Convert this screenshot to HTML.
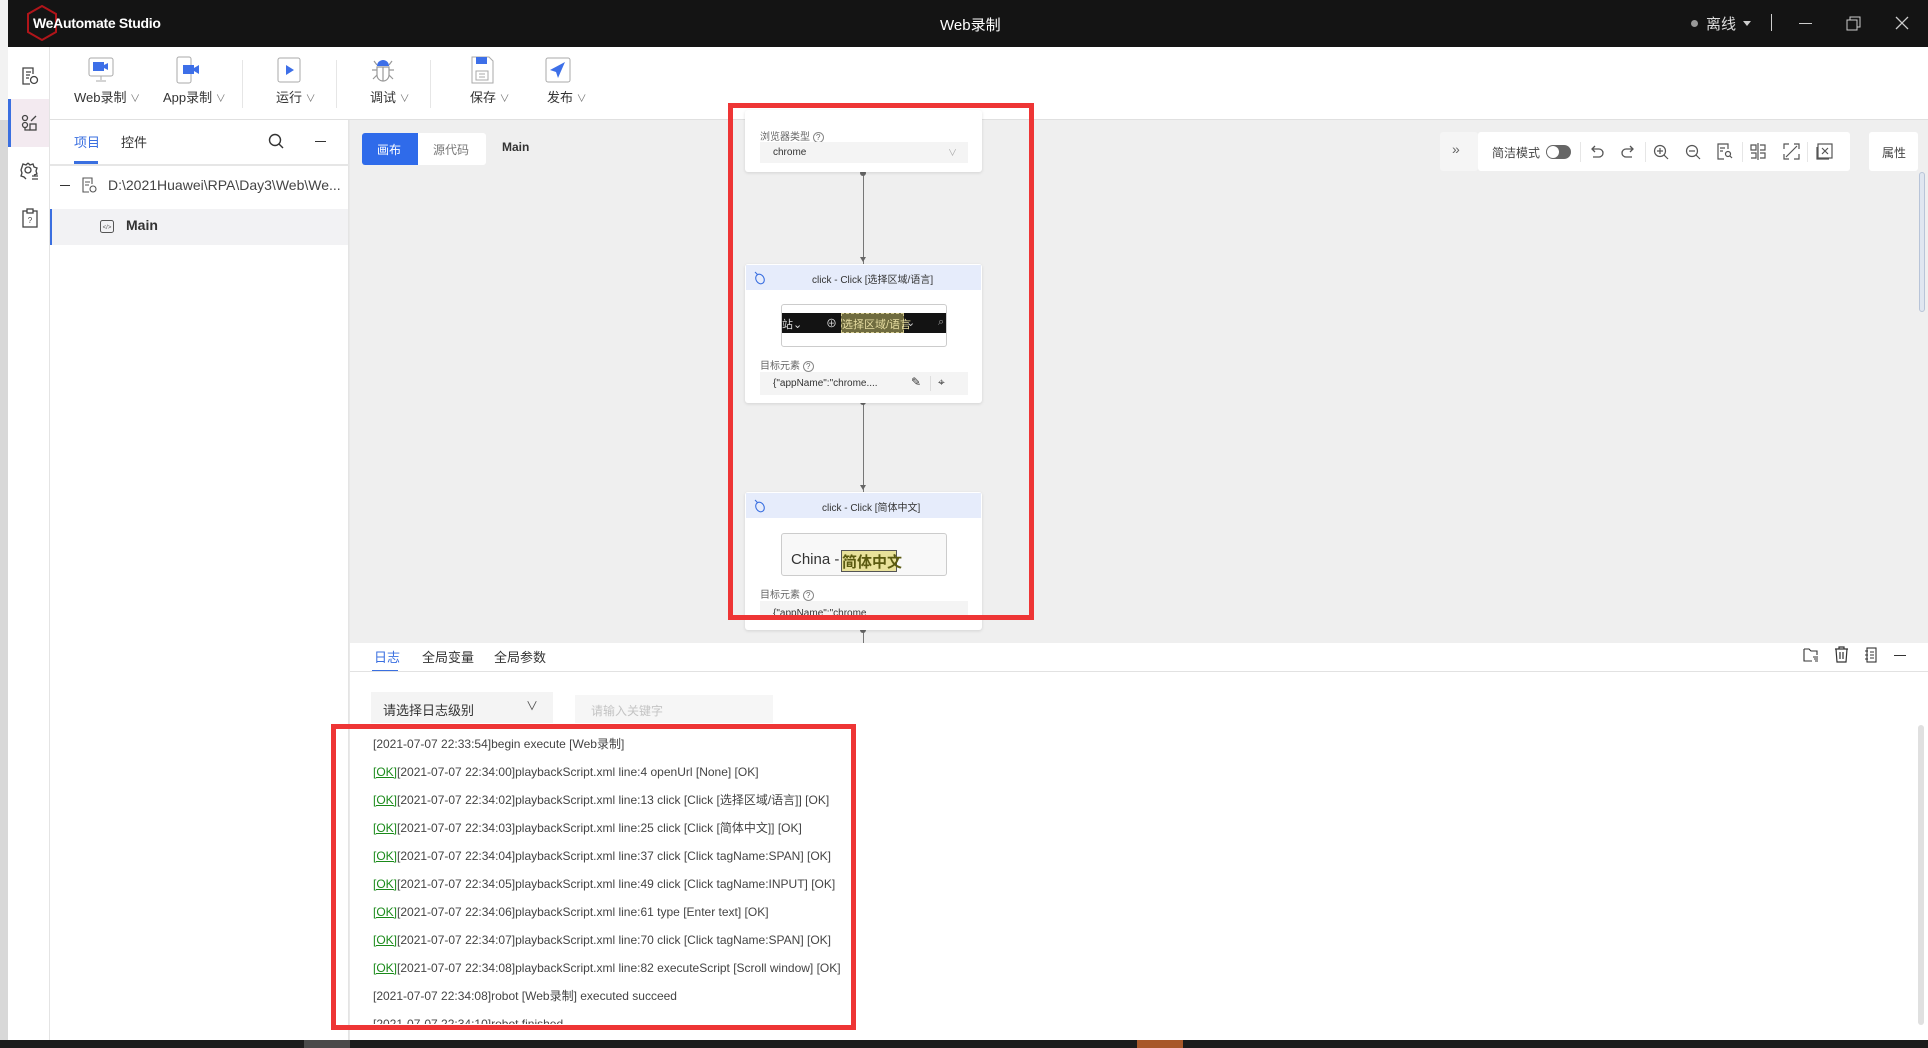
<!DOCTYPE html>
<html><head><meta charset="utf-8">
<style>
*{margin:0;padding:0;box-sizing:border-box}
body{width:1928px;height:1048px;overflow:hidden;position:relative;background:#e9e9e9;font-family:"Liberation Sans","Noto Sans CJK SC",sans-serif;color:#333}
.a{position:absolute}
.t{position:absolute;white-space:nowrap}
.ico{position:absolute}
</style></head><body>
<div class="a" style="left:0;top:0;width:8px;height:1040px;background:#d8d8d8"></div>
<div class="a" style="left:0;top:0;width:8px;height:120px;background:#f2f2f2"></div>
<div class="a" style="left:8px;top:0;width:1920px;height:47px;background:#141414"></div>
<svg class="ico" style="left:26px;top:5px" width="32" height="36" viewBox="0 0 32 36"><polygon points="16,1 30,9 30,27 16,35 2,27 2,9" fill="none" stroke="#b0151a" stroke-width="2"/></svg>
<div class="t" style="left:33px;top:15px;color:#fff;font-size:14px;font-weight:bold;letter-spacing:-0.3px">WeAutomate Studio</div>
<div class="t" style="left:940px;top:14px;color:#fff;font-size:15px">Web录制</div>
<div class="a" style="left:1691px;top:20px;width:7px;height:7px;border-radius:50%;background:#999"></div>
<div class="t" style="left:1706px;top:13px;color:#ddd;font-size:15px">离线</div>
<div class="a" style="left:1743px;top:21px;border-left:4px solid transparent;border-right:4px solid transparent;border-top:5px solid #ccc"></div>
<div class="a" style="left:1771px;top:14px;width:1px;height:17px;background:#ccc"></div>
<div class="a" style="left:1799px;top:23px;width:13px;height:1px;background:#ccc"></div>
<svg class="ico" style="left:1846px;top:16px" width="15" height="15"><rect x="1" y="4" width="10" height="10" fill="none" stroke="#ccc"/><path d="M4 4V1h10v10h-3" fill="none" stroke="#ccc"/></svg>
<svg class="ico" style="left:1895px;top:16px" width="14" height="14"><path d="M1 1L13 13M13 1L1 13" stroke="#ccc" stroke-width="1.3"/></svg>

<div class="a" style="left:8px;top:47px;width:42px;height:993px;background:#fff;border-right:1px solid #e4e4e4"></div>
<div class="a" style="left:8px;top:99px;width:41px;height:48px;background:#f3eaf0;border-left:3px solid #3a6fe0"></div>
<svg class="ico" style="left:21px;top:66px" width="18" height="20" viewBox="0 0 18 20" fill="none" stroke="#444" stroke-width="1.3"><path d="M12 8V2H2v16h7"/><path d="M5 6h5M5 9h4M5 12h3"/><circle cx="13" cy="14" r="3.5"/></svg>
<svg class="ico" style="left:21px;top:114px" width="18" height="18" viewBox="0 0 18 18" fill="none" stroke="#444" stroke-width="1.3"><circle cx="4" cy="4" r="2.5"/><circle cx="4" cy="11" r="2.5"/><rect x="9" y="10" width="6" height="6"/><path d="M10 7l5-5M4 13.5V16h5"/></svg>
<svg class="ico" style="left:20px;top:161px" width="20" height="20" viewBox="0 0 20 20" fill="none" stroke="#444" stroke-width="1.3"><circle cx="8" cy="9" r="3"/><path d="M8 2l2 2 3-1 1 3 3 1-1 3 1 3-3 1"/><path d="M8 2L6 4 3 3 2 6l-1 3 1 3-1 3 3 1 2 2"/><path d="M12 15h6M12 18h6"/></svg>
<svg class="ico" style="left:21px;top:208px" width="18" height="20" viewBox="0 0 18 20" fill="none" stroke="#444" stroke-width="1.3"><rect x="2" y="3" width="14" height="16"/><rect x="6" y="1" width="6" height="4" fill="#fff"/><text x="9" y="15" font-size="8" text-anchor="middle" fill="#444" stroke="none">?</text></svg>

<div class="a" style="left:50px;top:47px;width:1878px;height:73px;background:#fff;border-bottom:1px solid #e0e0e0"></div>
<svg class="ico" style="left:88px;top:57px" width="26" height="26" viewBox="0 0 26 26"><rect x="1" y="1" width="24" height="18" rx="2" fill="#fff" stroke="#aaa"/><rect x="5" y="5" width="11" height="9" fill="#3d6fe8"/><path d="M16 8l4-2v7l-4-2z" fill="#3d6fe8"/><path d="M13 19v4M8 24h10" stroke="#aaa"/></svg>
<svg class="ico" style="left:176px;top:56px" width="26" height="28" viewBox="0 0 26 28"><rect x="1" y="1" width="14" height="26" rx="2" fill="#fff" stroke="#aaa"/><rect x="7" y="9" width="11" height="9" fill="#3d6fe8"/><path d="M18 12l5-3v9l-5-3z" fill="#3d6fe8"/></svg>
<svg class="ico" style="left:277px;top:57px" width="24" height="26" viewBox="0 0 24 26"><rect x="1" y="1" width="22" height="24" rx="2" fill="#fff" stroke="#aaa"/><path d="M9 8l8 5-8 5z" fill="#3d6fe8"/></svg>
<svg class="ico" style="left:370px;top:56px" width="26" height="28" viewBox="0 0 26 28" fill="none" stroke="#999" stroke-width="1.2"><path d="M7 10a6 6 0 0 1 12 0z" fill="#3d6fe8" stroke="none"/><path d="M7 11h12v8a6 6 0 0 1-12 0z"/><path d="M13 11v14M7 14H2M19 14h5M7 19l-4 4M19 19l4 4M7 9L4 5M19 9l3-4"/></svg>
<svg class="ico" style="left:470px;top:56px" width="24" height="28" viewBox="0 0 24 28"><path d="M2 1h17l4 4v22H2z" fill="#fff" stroke="#aaa"/><rect x="6" y="1" width="11" height="7" fill="#3d6fe8"/><rect x="6" y="15" width="12" height="9" fill="none" stroke="#aaa"/><path d="M9 18h6M9 21h6" stroke="#aaa"/></svg>
<svg class="ico" style="left:545px;top:57px" width="26" height="26" viewBox="0 0 26 26"><rect x="1" y="1" width="24" height="24" rx="2" fill="#fff" stroke="#aaa"/><path d="M20 5L5 13l6 2 2 6z" fill="#3d6fe8"/></svg>
<div class="t" style="left:74px;top:87px;font-size:13px;color:#333">Web录制 <span style="font-size:10px;color:#777">∨</span></div>
<div class="t" style="left:163px;top:87px;font-size:13px;color:#333">App录制 <span style="font-size:10px;color:#777">∨</span></div>
<div class="t" style="left:276px;top:87px;font-size:13px;color:#333">运行 <span style="font-size:10px;color:#777">∨</span></div>
<div class="t" style="left:370px;top:87px;font-size:13px;color:#333">调试 <span style="font-size:10px;color:#777">∨</span></div>
<div class="t" style="left:470px;top:87px;font-size:13px;color:#333">保存 <span style="font-size:10px;color:#777">∨</span></div>
<div class="t" style="left:547px;top:87px;font-size:13px;color:#333">发布 <span style="font-size:10px;color:#777">∨</span></div>
<div class="a" style="left:242px;top:60px;width:1px;height:48px;background:#e6e6e6"></div>
<div class="a" style="left:336px;top:60px;width:1px;height:48px;background:#e6e6e6"></div>
<div class="a" style="left:430px;top:60px;width:1px;height:48px;background:#e6e6e6"></div>

<div class="a" style="left:50px;top:120px;width:299px;height:920px;background:#fff;border-right:1px solid #e4e4e4"></div>
<div class="t" style="left:74px;top:132px;font-size:13px;color:#3a6fe0">项目</div>
<div class="t" style="left:121px;top:132px;font-size:13px;color:#333">控件</div>
<div class="a" style="left:74px;top:161px;width:24px;height:3px;background:#3a6fe0"></div>
<div class="a" style="left:50px;top:164px;width:299px;height:2px;background:#e6e6e6"></div>
<svg class="ico" style="left:268px;top:133px" width="17" height="17" fill="none" stroke="#333" stroke-width="1.4"><circle cx="7" cy="7" r="5.5"/><path d="M11 11l4 4"/></svg>
<div class="a" style="left:315px;top:141px;width:11px;height:1px;background:#333"></div>
<div class="a" style="left:60px;top:185px;width:10px;height:1px;background:#333"></div>
<svg class="ico" style="left:82px;top:177px" width="15" height="17" viewBox="0 0 15 17" fill="none" stroke="#555" stroke-width="1.1"><path d="M10 7V1H1v14h6"/><path d="M3 5h5M3 8h4"/><circle cx="11" cy="12" r="3"/></svg>
<div class="t" style="left:108px;top:177px;font-size:14px;color:#444">D:\2021Huawei\RPA\Day3\Web\We...</div>
<div class="a" style="left:50px;top:209px;width:298px;height:36px;background:#f2f2f4;border-left:2px solid #3a6fe0"></div>
<svg class="ico" style="left:100px;top:220px" width="14" height="13"><rect x="0.5" y="0.5" width="13" height="12" rx="2" fill="none" stroke="#555"/><text x="7" y="9" font-size="6" text-anchor="middle" fill="#555">&lt;/&gt;</text></svg>
<div class="t" style="left:126px;top:217px;font-size:14px;font-weight:bold;color:#333">Main</div>

<div class="a" style="left:350px;top:120px;width:1578px;height:523px;background:#efefef"></div>
<div class="a" style="left:362px;top:133px;width:56px;height:32px;background:#2f6bea;border-radius:3px 0 0 3px"></div>
<div class="t" style="left:377px;top:141px;font-size:12px;color:#fff">画布</div>
<div class="a" style="left:418px;top:133px;width:68px;height:32px;background:#fff;border-radius:0 3px 3px 0"></div>
<div class="t" style="left:433px;top:141px;font-size:12px;color:#777">源代码</div>
<div class="t" style="left:502px;top:140px;font-size:12px;color:#333;font-weight:bold">Main</div>

<div class="a" style="left:1440px;top:132px;width:38px;height:39px;background:#f5f5f5;border-radius:3px"></div>
<div class="t" style="left:1452px;top:141px;font-size:14px;color:#666">»</div>
<div class="a" style="left:1478px;top:132px;width:372px;height:39px;background:#fff;border-radius:3px"></div>
<div class="t" style="left:1492px;top:144px;font-size:12px;color:#444">简洁模式</div>
<div class="a" style="left:1546px;top:145px;width:25px;height:14px;border-radius:7px;background:#666"></div>
<div class="a" style="left:1547px;top:146px;width:12px;height:12px;border-radius:50%;background:#fff"></div>
<div class="a" style="left:1580px;top:142px;width:1px;height:20px;background:#e6e6e6"></div>
<div class="a" style="left:1645px;top:142px;width:1px;height:20px;background:#e6e6e6"></div>
<div class="a" style="left:1742px;top:142px;width:1px;height:20px;background:#e6e6e6"></div>
<div class="a" style="left:1807px;top:142px;width:1px;height:20px;background:#e6e6e6"></div>
<svg class="ico" style="left:1589px;top:144px" width="16" height="16" fill="none" stroke="#555" stroke-width="1.3"><path d="M4 5h6a4 4 0 0 1 0 8H4"/><path d="M6 2L3 5l3 3"/></svg>
<svg class="ico" style="left:1620px;top:144px" width="16" height="16" fill="none" stroke="#555" stroke-width="1.3"><path d="M12 5H6a4 4 0 0 0 0 8h6"/><path d="M10 2l3 3-3 3"/></svg>
<svg class="ico" style="left:1653px;top:144px" width="16" height="16" fill="none" stroke="#555" stroke-width="1.2"><circle cx="7" cy="7" r="5.5"/><path d="M11 11l4 4M4 7h6M7 4v6"/></svg>
<svg class="ico" style="left:1685px;top:144px" width="16" height="16" fill="none" stroke="#555" stroke-width="1.2"><circle cx="7" cy="7" r="5.5"/><path d="M11 11l4 4M4 7h6"/></svg>
<svg class="ico" style="left:1717px;top:143px" width="16" height="17" fill="none" stroke="#555" stroke-width="1.2"><path d="M11 6V1H1v15h6"/><path d="M3 5h5M3 8h3"/><circle cx="11" cy="11" r="2.5"/><path d="M13 13l2 2"/></svg>
<svg class="ico" style="left:1750px;top:143px" width="16" height="17" fill="none" stroke="#555" stroke-width="1.2"><path d="M8 0v17M1 2h5v5H1zM10 2h5v5h-5M1 10h5v5H1M10 10h5v5h-5"/></svg>
<svg class="ico" style="left:1783px;top:143px" width="17" height="17" fill="none" stroke="#555" stroke-width="1.2"><path d="M1 6V1h5M11 1h5v5M16 11v5h-5M6 16H1v-5M3 14L14 3"/></svg>
<svg class="ico" style="left:1816px;top:143px" width="17" height="17" fill="none" stroke="#555" stroke-width="1.2"><rect x="2" y="1" width="14" height="14"/><path d="M1 4v12h12M6 5l6 6M12 5l-6 6"/></svg>
<div class="a" style="left:1869px;top:132px;width:49px;height:39px;background:#fff;border-radius:3px"></div>
<div class="t" style="left:1882px;top:144px;font-size:12px;color:#444">属性</div>
<div class="a" style="left:1919px;top:172px;width:6px;height:140px;border-radius:3px;background:#dfe6f0;border:1px solid #b8c4d8"></div>

<div class="a" style="left:863px;top:172px;width:1px;height:92px;background:#777"></div>
<div class="a" style="left:860px;top:170px;width:6px;height:6px;border-radius:50%;background:#666"></div>
<div class="a" style="left:860px;top:257px;border-left:3px solid transparent;border-right:3px solid transparent;border-top:5px solid #666"></div>
<div class="a" style="left:863px;top:403px;width:1px;height:90px;background:#777"></div>
<div class="a" style="left:860px;top:399px;width:6px;height:6px;border-radius:50%;background:#666"></div>
<div class="a" style="left:860px;top:485px;border-left:3px solid transparent;border-right:3px solid transparent;border-top:5px solid #666"></div>
<div class="a" style="left:863px;top:630px;width:1px;height:13px;background:#777"></div>
<div class="a" style="left:860px;top:627px;width:6px;height:6px;border-radius:50%;background:#666"></div>

<div class="a" style="left:745px;top:110px;width:237px;height:62px;background:#fff;border-radius:3px;box-shadow:0 1px 3px rgba(0,0,0,.12)"></div>
<div class="t" style="left:760px;top:128px;font-size:10px;color:#666">浏览器类型 <span style="display:inline-block;width:11px;height:11px;border:1px solid #888;border-radius:50%;font-size:8px;text-align:center;line-height:10px">?</span></div>
<div class="a" style="left:760px;top:142px;width:208px;height:21px;background:#f4f4f4"></div>
<div class="t" style="left:773px;top:147px;font-size:10px;color:#333">chrome</div>
<div class="t" style="left:948px;top:146px;font-size:9px;color:#aaa">∨</div>

<div class="a" style="left:745px;top:264px;width:237px;height:139px;background:#fff;border-radius:3px;box-shadow:0 1px 3px rgba(0,0,0,.12)"></div>
<div class="a" style="left:746px;top:265px;width:235px;height:25px;background:#e6ecfb"></div>
<svg class="ico" style="left:754px;top:271px" width="12" height="14" fill="none" stroke="#3a6fe0" stroke-width="1.1"><ellipse cx="6" cy="8" rx="4" ry="5" transform="rotate(-30 6 8)"/><path d="M1 1l3 3"/></svg>
<div class="t" style="left:812px;top:271px;font-size:10px;color:#333">click - Click [选择区域/语言]</div>
<div class="a" style="left:781px;top:304px;width:166px;height:43px;border:1px solid #ccc;border-radius:3px;background:#fff"></div>
<div class="a" style="left:782px;top:313px;width:164px;height:20px;background:#131313"></div>
<div class="t" style="left:782px;top:316px;font-size:11px;color:#ddd">站⌄</div>
<div class="t" style="left:826px;top:315px;font-size:11px;color:#ddd">⊕</div>
<div class="a" style="left:841px;top:313px;width:63px;height:20px;background:#6f6b3f;border:1px dashed #cfc68c"></div>
<div class="t" style="left:842px;top:316px;font-size:11px;color:#e6dca0">选择区域/语言</div>
<div class="t" style="left:906px;top:316px;font-size:11px;color:#ccc">⌄</div>
<div class="t" style="left:938px;top:316px;font-size:11px;color:#999">⌕</div>
<div class="t" style="left:760px;top:357px;font-size:10px;color:#666">目标元素 <span style="display:inline-block;width:11px;height:11px;border:1px solid #888;border-radius:50%;font-size:8px;text-align:center;line-height:10px">?</span></div>
<div class="a" style="left:760px;top:372px;width:208px;height:23px;background:#f4f4f4"></div>
<div class="t" style="left:773px;top:378px;font-size:10px;color:#333">{"appName":"chrome....</div>
<div class="t" style="left:911px;top:375px;font-size:12px;color:#333">✎</div>
<div class="a" style="left:930px;top:376px;width:1px;height:15px;background:#ddd"></div>
<div class="t" style="left:938px;top:375px;font-size:12px;color:#333">⌖</div>

<div class="a" style="left:745px;top:492px;width:237px;height:138px;background:#fff;border-radius:3px;box-shadow:0 1px 3px rgba(0,0,0,.12)"></div>
<div class="a" style="left:746px;top:493px;width:235px;height:25px;background:#e6ecfb"></div>
<svg class="ico" style="left:754px;top:499px" width="12" height="14" fill="none" stroke="#3a6fe0" stroke-width="1.1"><ellipse cx="6" cy="8" rx="4" ry="5" transform="rotate(-30 6 8)"/><path d="M1 1l3 3"/></svg>
<div class="t" style="left:822px;top:499px;font-size:10px;color:#333">click - Click [简体中文]</div>
<div class="a" style="left:781px;top:533px;width:166px;height:43px;border:1px solid #ccc;border-radius:3px;background:#f8f8f8"></div>
<div class="t" style="left:791px;top:551px;font-size:15px;color:#333">China - </div>
<div class="a" style="left:841px;top:550px;width:56px;height:22px;background:#e8e19a;border:1px solid #555"></div>
<div class="t" style="left:842px;top:551px;font-size:15px;color:#5a5a10;font-weight:bold">简体中文</div>
<div class="t" style="left:760px;top:586px;font-size:10px;color:#666">目标元素 <span style="display:inline-block;width:11px;height:11px;border:1px solid #888;border-radius:50%;font-size:8px;text-align:center;line-height:10px">?</span></div>
<div class="a" style="left:760px;top:601px;width:208px;height:18px;background:#f4f4f4;overflow:hidden"><div class="t" style="left:13px;top:7px;font-size:10px;color:#333">{"appName":"chrome</div></div>

<div class="a" style="left:728px;top:103px;width:306px;height:517px;border:5px solid #ee3535"></div>

<div class="a" style="left:350px;top:643px;width:1578px;height:397px;background:#fff"></div>
<div class="t" style="left:374px;top:647px;font-size:13px;color:#3a6fe0">日志</div>
<div class="t" style="left:422px;top:647px;font-size:13px;color:#333">全局变量</div>
<div class="t" style="left:494px;top:647px;font-size:13px;color:#333">全局参数</div>
<div class="a" style="left:372px;top:670px;width:26px;height:2px;background:#3a6fe0"></div>
<div class="a" style="left:350px;top:671px;width:1578px;height:1px;background:#e2e2e2"></div>
<svg class="ico" style="left:1803px;top:648px" width="16" height="14" fill="none" stroke="#333" stroke-width="1.1"><path d="M1 1h5l2 2h6v4M1 1v12h8"/><path d="M10 9h5M11 11h4M12 13h3"/></svg>
<svg class="ico" style="left:1834px;top:646px" width="15" height="17" fill="none" stroke="#333" stroke-width="1.2"><path d="M1 3h13M5 3V1h5v2M2 3l1 13h9l1-13M6 6v7M9 6v7"/></svg>
<svg class="ico" style="left:1865px;top:647px" width="12" height="16" fill="none" stroke="#333" stroke-width="1.1"><rect x="2" y="1" width="9" height="14"/><path d="M0 4h3M0 8h3M0 12h3M5 5h4M5 8h4M5 11h4"/></svg>
<div class="a" style="left:1894px;top:655px;width:12px;height:1px;background:#333"></div>

<div class="a" style="left:371px;top:692px;width:182px;height:31px;background:#f4f4f4"></div>
<div class="t" style="left:383px;top:700px;font-size:13px;color:#333">请选择日志级别</div>
<div class="t" style="left:526px;top:697px;font-size:12px;color:#555">∨</div>
<div class="a" style="left:575px;top:695px;width:198px;height:28px;background:#f6f6f6"></div>
<div class="t" style="left:591px;top:702px;font-size:12px;color:#c4c4c4">请输入关键字</div>

<div class="a" style="left:373px;top:730px;width:470px;height:294px;overflow:hidden;font-size:12px;color:#444;line-height:28px;white-space:nowrap">
<div>[2021-07-07 22:33:54]begin execute [Web录制]</div>
<div><u style="color:#1a8a1a">[OK]</u>[2021-07-07 22:34:00]playbackScript.xml line:4 openUrl [None] [OK]</div>
<div><u style="color:#1a8a1a">[OK]</u>[2021-07-07 22:34:02]playbackScript.xml line:13 click [Click [选择区域/语言]] [OK]</div>
<div><u style="color:#1a8a1a">[OK]</u>[2021-07-07 22:34:03]playbackScript.xml line:25 click [Click [简体中文]] [OK]</div>
<div><u style="color:#1a8a1a">[OK]</u>[2021-07-07 22:34:04]playbackScript.xml line:37 click [Click tagName:SPAN] [OK]</div>
<div><u style="color:#1a8a1a">[OK]</u>[2021-07-07 22:34:05]playbackScript.xml line:49 click [Click tagName:INPUT] [OK]</div>
<div><u style="color:#1a8a1a">[OK]</u>[2021-07-07 22:34:06]playbackScript.xml line:61 type [Enter text] [OK]</div>
<div><u style="color:#1a8a1a">[OK]</u>[2021-07-07 22:34:07]playbackScript.xml line:70 click [Click tagName:SPAN] [OK]</div>
<div><u style="color:#1a8a1a">[OK]</u>[2021-07-07 22:34:08]playbackScript.xml line:82 executeScript [Scroll window] [OK]</div>
<div>[2021-07-07 22:34:08]robot [Web录制] executed succeed</div>
<div>[2021-07-07 22:34:10]robot finished</div>
</div>
<div class="a" style="left:1918px;top:725px;width:6px;height:300px;border-radius:3px;background:#e0e0e0"></div>

<div class="a" style="left:331px;top:724px;width:525px;height:306px;border:5px solid #ee3535"></div>

<div class="a" style="left:0;top:1040px;width:1928px;height:8px;background:#1c1c1c"></div>
<div class="a" style="left:304px;top:1040px;width:46px;height:8px;background:#4a4a4a"></div>
<div class="a" style="left:1137px;top:1040px;width:46px;height:8px;background:#a8582a"></div>
</body></html>
